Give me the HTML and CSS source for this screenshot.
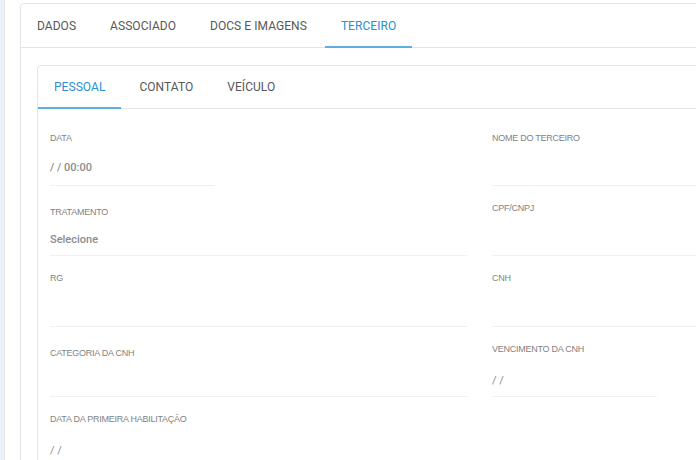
FILE: index.html
```html
<!DOCTYPE html>
<html lang="pt-BR">
<head>
  <meta charset="UTF-8">
  <meta name="viewport" content="width=device-width, initial-scale=1.0">
  <title>Sinistro - Terceiro</title>
  <link rel="stylesheet" href="styles.css">
</head>
<body>

<div class="page">
  <div class="side-edge"></div>

  <div class="content">
    <div class="card">
      <ul class="tabs">
        <li>DADOS</li>
        <li>ASSOCIADO</li>
        <li>DOCS E IMAGENS</li>
        <li class="active">TERCEIRO</li>
      </ul>

      <div class="card-body">
        <div class="card inner">
          <ul class="tabs">
            <li class="active">PESSOAL</li>
            <li>CONTATO</li>
            <li>VEÍCULO</li>
          </ul>

          <!-- Terceiro / pessoal -->
          <div class="form-grid">
            <div class="field date">
              <label>DATA</label>
              <div class="value">/ / 00:00</div>
            </div>
            <div class="field">
              <label>NOME DO TERCEIRO</label>
              <div class="value"></div>
            </div>

            <div class="field select">
              <label>TRATAMENTO</label>
              <div class="value">Selecione</div>
            </div>
            <div class="field">
              <label>CPF/CNPJ</label>
              <div class="value"></div>
            </div>

            <div class="field">
              <label>RG</label>
              <div class="value"></div>
            </div>
            <div class="field">
              <label>CNH</label>
              <div class="value"></div>
            </div>

            <div class="field select">
              <label>CATEGORIA DA CNH</label>
              <div class="value"></div>
            </div>
            <div class="field date">
              <label>VENCIMENTO DA CNH</label>
              <div class="value slim">/ /</div>
            </div>

            <div class="field date">
              <label>DATA DA PRIMEIRA HABILITAÇÃO</label>
              <div class="value slim">/ /</div>
            </div>
          </div>
        </div>
      </div>
    </div>
  </div>
</div>

</body>
</html>
```

FILE: styles.css
```css
body { margin: 0; font-family: Roboto, "Liberation Sans", Arial, sans-serif; background: #fff; overflow: hidden; }
.page { display: flex; height: 460px; }
.side-edge { width: 4px; flex: none; background: #eaf2f8; border-right: 1px solid #e7e9eb; }
.content { padding: 3px 0 0 15px; }

.card { width: 930px; border: 1px solid #e4e4e4; border-radius: 4px; background: #fff; }
.card-body { padding: 17px 16px; }
.card.inner { width: auto; }

.tabs { list-style: none; margin: 0; padding: 0; display: flex; gap: 2px; height: 43px; border-bottom: 1px solid #e4e4e4; }
.card.inner .tabs { height: 42px; }
.tabs li { padding: 0 16px; display: flex; align-items: center; font-size: 12px; color: #575757; letter-spacing: 0.05px; border-bottom: 2px solid transparent; margin-bottom: -1px; padding-top: 1px; }
.tabs li.active { color: #2a90d2; border-bottom-color: #5eaee2; }

.form-grid { display: grid; grid-template-columns: 417px 417px; grid-template-rows: 70px 70px 71px 70px 70px; column-gap: 25px; padding: 7px 12px 0; }
.field { box-sizing: border-box; border-bottom: 1px solid #f0f0f0; padding-top: 17px; }
.field.date { width: 165px; }
.field.select { padding-top: 21px; }
.field label { display: block; font-family: "Liberation Sans", Arial, sans-serif; font-size: 9px; line-height: 10px; color: #828282; letter-spacing: -0.25px; }
.field .value { margin-top: 18px; font-size: 11px; line-height: 14px; height: 14px; color: #8c8c8c; font-weight: 500; }
.field.select .value { margin-top: 16px; }
.field .value.slim { font-weight: 400; margin-top: 20px; }
```
